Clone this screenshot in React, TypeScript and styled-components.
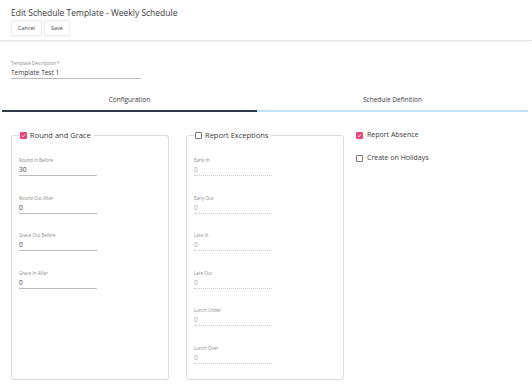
import * as React from 'react';
import styled, { createGlobalStyle } from 'styled-components';

const Global = createGlobalStyle`
    body {
        margin: 0;
        background: #fff;
        font-family: "Open Sans", "Noto Sans", sans-serif;
        color: #333;
    }
`;

const Page = styled.div`
    width: 532px;
    height: 386px;
    overflow: hidden;
`;

const Header = styled.header`
    padding: 6px 11px 4px;
    border-bottom: 1px solid #e6e6e6;
    box-shadow: 0 1px 2px rgba(0, 0, 0, 0.06);
`;

const Title = styled.h1`
    margin: 0;
    font-size: 8.5px;
    line-height: 13px;
    font-weight: 400;
    color: #3a3a3a;
`;

const Actions = styled.div`
    display: flex;
    gap: 2px;
    margin-top: 1px;
`;

const Button = styled.button`
    height: 16px;
    padding: 0 6px;
    font-family: inherit;
    font-size: 5.5px;
    color: #444;
    background: #fff;
    border: 1px solid #ececec;
    border-radius: 2px;
    box-shadow: 0 1px 1px rgba(0, 0, 0, 0.04);
`;

const Body = styled.div`
    padding: 19px 0 0;
`;

const DescField = styled.div`
    margin-left: 11px;
    width: 130px;
    border-bottom: 1px solid #bbb;
`;

const Label = styled.div`
    font-size: 4.5px;
    line-height: 7px;
    color: #8a8a8a;
`;

const Value = styled.div<{ $disabled?: boolean }>`
    font-size: 6.5px;
    line-height: 11px;
    color: ${(p) => (p.$disabled ? '#aaa' : '#3a3a3a')};
`;

const Tabs = styled.div`
    display: flex;
    margin: 16px 4px 0 2px;
`;

const Tab = styled.div<{ $active?: boolean }>`
    flex: ${(p) => (p.$active ? '0 0 255px' : '1')};
    text-align: center;
    font-size: 6.5px;
    line-height: 10px;
    padding-bottom: 5px;
    color: #3a3a3a;
    border-bottom: 2px solid ${(p) => (p.$active ? '#2f3b48' : '#bfe0fa')};
`;

const Columns = styled.div`
    display: flex;
    align-items: flex-start;
    padding: 18px 0 0 11px;
`;

const Group = styled.fieldset<{ $width: number; $gap?: number }>`
    box-sizing: border-box;
    width: ${(p) => p.$width}px;
    height: 250px;
    margin: 0 0 0 ${(p) => p.$gap ?? 0}px;
    padding: 17px 7px 0;
    border: 1px solid #dcdcdc;
    border-radius: 3px;
`;

const Legend = styled.legend`
    display: flex;
    align-items: center;
    gap: 3px;
    margin-left: 0;
    padding: 0 3px 0 1px;
    font-size: 7.5px;
    color: #3a3a3a;
`;

const Box = styled.span<{ $checked?: boolean }>`
    box-sizing: border-box;
    display: inline-flex;
    align-items: center;
    justify-content: center;
    width: 7px;
    height: 7px;
    border-radius: 1px;
    background: ${(p) => (p.$checked ? '#ec407a' : '#fff')};
    border: 1px solid ${(p) => (p.$checked ? '#ec407a' : '#777')};
`;

const Field = styled.div<{ $disabled?: boolean }>`
    width: 78px;
    margin-bottom: 18.5px;
    border-bottom: 1px ${(p) => (p.$disabled ? 'dotted #c8c8c8' : 'solid #bbb')};
`;

const Options = styled.div`
    display: flex;
    flex-direction: column;
    gap: 13px;
    margin-left: 12px;
`;

const Option = styled.div`
    display: flex;
    align-items: center;
    gap: 4px;
    font-size: 7px;
    line-height: 10px;
    color: #3a3a3a;
`;

const Check = ({ checked }: { checked?: boolean }) => (
    <Box $checked={checked}>
        {checked && (
            <svg width="5" height="5" viewBox="0 0 10 10">
                <path d="M1.5 5.2 L4 7.6 L8.6 2.4" fill="none" stroke="#fff" strokeWidth="1.6" />
            </svg>
        )}
    </Box>
);

const round = [
    ['Round In Before', '30'],
    ['Round Out After', '0'],
    ['Grace Out Before', '0'],
    ['Grace In After', '0'],
];

const exceptions = ['Early In', 'Early Out', 'Late In', 'Late Out', 'Lunch Under', 'Lunch Over'];

export default function App() {
    return (
        <Page>
            <Global />
            <Header>
                <Title>Edit Schedule Template - Weekly Schedule</Title>
                <Actions>
                    <Button>Cancel</Button>
                    <Button>Save</Button>
                </Actions>
            </Header>
            <Body>
                <DescField>
                    <Label>Template Description *</Label>
                    <Value>Template Test 1</Value>
                </DescField>
                <Tabs>
                    <Tab $active>Configuration</Tab>
                    <Tab>Schedule Definition</Tab>
                </Tabs>
                <Columns>
                    <Group $width={158}>
                        <Legend>
                            <Check checked />
                            Round and Grace
                        </Legend>
                        {round.map(([label, value]) => (
                            <Field key={label}>
                                <Label>{label}</Label>
                                <Value>{value}</Value>
                            </Field>
                        ))}
                    </Group>
                    <Group $width={158} $gap={17}>
                        <Legend>
                            <Check />
                            Report Exceptions
                        </Legend>
                        {exceptions.map((label) => (
                            <Field key={label} $disabled>
                                <Label>{label}</Label>
                                <Value $disabled>0</Value>
                            </Field>
                        ))}
                    </Group>
                    <Options>
                        <Option>
                            <Check checked />
                            Report Absence
                        </Option>
                        <Option>
                            <Check />
                            Create on Holidays
                        </Option>
                    </Options>
                </Columns>
            </Body>
        </Page>
    );
}
